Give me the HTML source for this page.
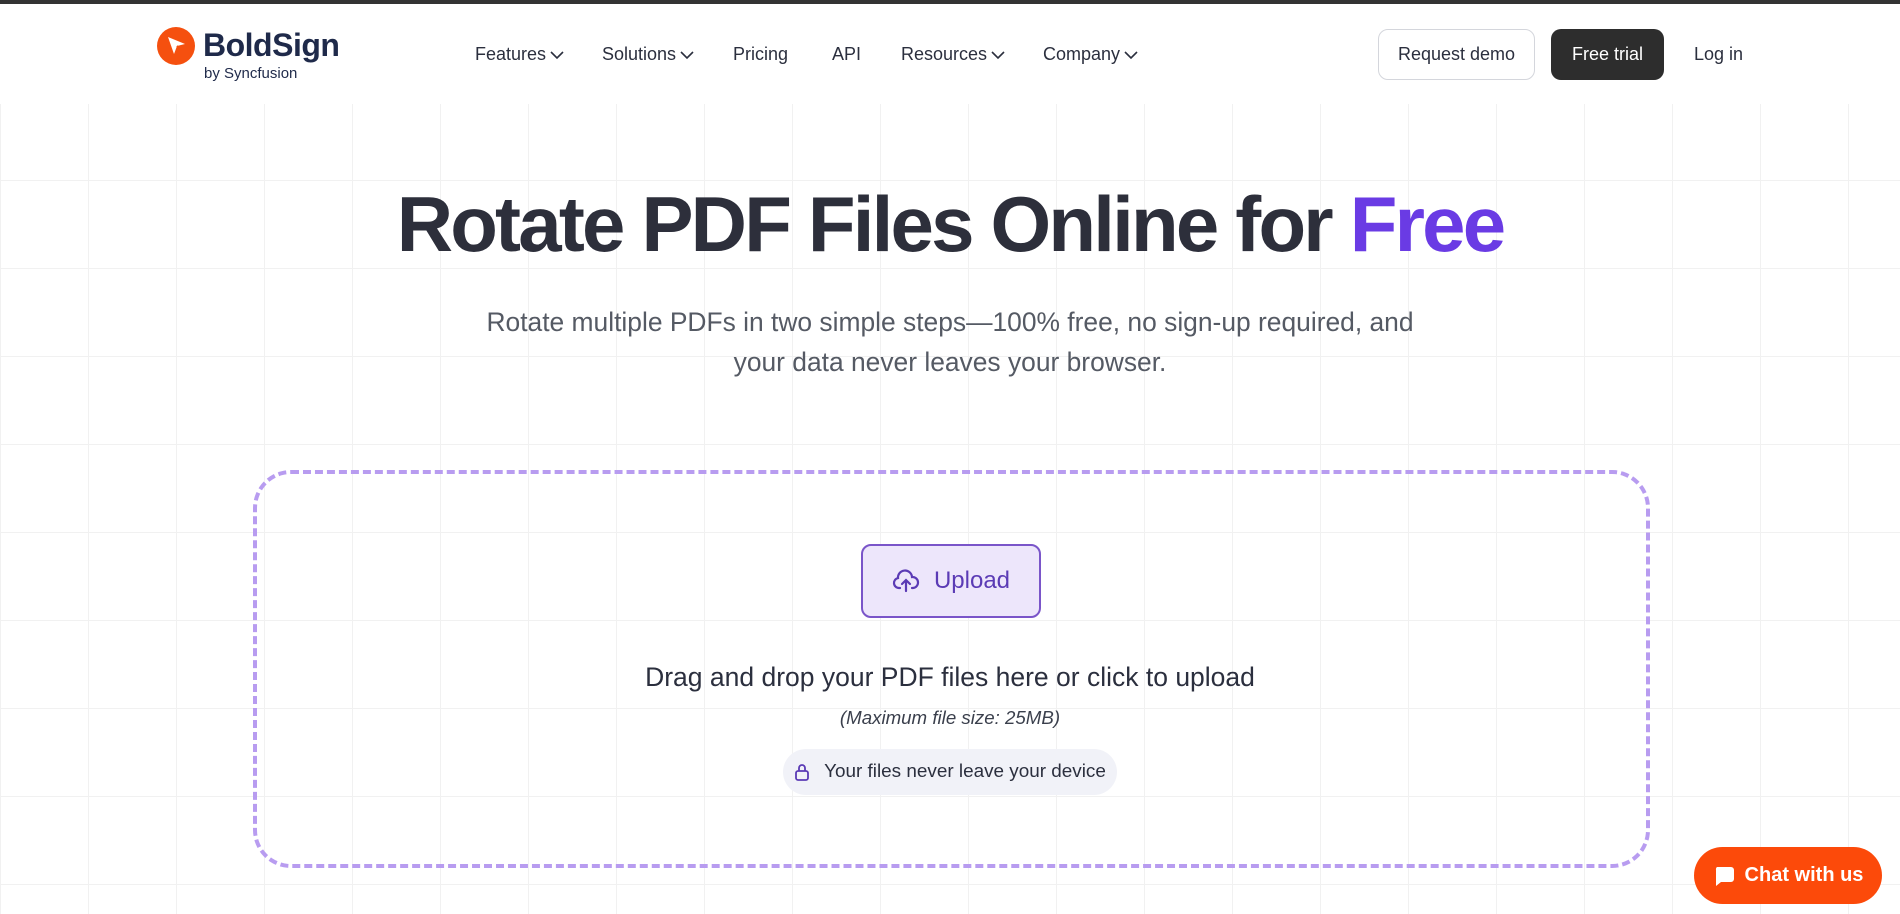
<!DOCTYPE html>
<html><head><meta charset="utf-8"><style>
*{box-sizing:border-box;margin:0;padding:0}
body{width:1900px;height:914px;overflow:hidden;background:#fff;font-family:"Liberation Sans",sans-serif;position:relative;color:#2b2f3e}
.top{position:absolute;top:0;left:0;width:1900px;height:4px;background:#333}
.grid{position:absolute;top:104px;left:0;width:1900px;height:810px;background-image:linear-gradient(#f1f1f1 1px,transparent 1px),linear-gradient(90deg,#f1f1f1 1px,transparent 1px);background-size:88px 88px;background-position:0 76px,0 0}
.logo{position:absolute;left:157px;top:27px}
.logo .ic{position:absolute;left:0;top:0;width:38px;height:38px;border-radius:50%;background:#f5500f}
.logo .t1{position:absolute;left:46px;top:0px;font-size:32px;font-weight:bold;color:#1f2a4a;letter-spacing:-0.5px}
.logo .t2{position:absolute;left:47px;top:38px;font-size:15px;color:#1f2a4a;white-space:nowrap}
.nav{position:absolute;top:44px;font-size:18px;color:#2b2f3e}
.nav svg{vertical-align:middle;margin-left:4px}
.btn{position:absolute;top:29px;height:51px;border-radius:10px;font-size:18px;display:flex;align-items:center;justify-content:center}
h1{position:absolute;top:185px;left:0;width:1900px;text-align:center;font-size:78px;line-height:78px;font-weight:bold;color:#2d2f3b;letter-spacing:-2.8px}
h1 span{color:#6a3be4}
.sub{position:absolute;top:302px;left:0;width:1900px;text-align:center;font-size:26.4px;line-height:40px;color:#555a64}
.drop{position:absolute;left:253px;top:470px;width:1397px;height:398px;border:4px dashed #b89cf0;border-radius:38px}
.up{position:absolute;left:861px;top:544px;width:180px;height:74px;border:2px solid #7a55c9;background:#ede6fb;border-radius:10px;display:flex;align-items:center;justify-content:center;font-size:24px;color:#5b3bb5}
.drag{position:absolute;top:662px;left:0;width:1900px;text-align:center;font-size:26.5px;color:#2b2f3e}
.max{position:absolute;top:707px;left:0;width:1900px;text-align:center;font-size:18.7px;font-style:italic;color:#3a3f4c}
.pill{position:absolute;left:783px;top:749px;width:334px;height:46px;border-radius:23px;background:#f1f2f8;display:flex;align-items:center;justify-content:center;font-size:18.9px;color:#2b2f3e}
.chat{position:absolute;left:1694px;top:847px;width:188px;height:57px;border-radius:29px;background:#fc4a0a;color:#fff;font-weight:bold;font-size:20px;display:flex;align-items:center;justify-content:center}
</style></head><body>
<div class="top"></div>
<div class="grid"></div>
<div class="logo"><div class="ic"><svg width="38" height="38" viewBox="0 0 38 38"><path d="M11 10 L28 17 L20 19 L17 27 Z" fill="#fff"/><path d="M20 19 L24 23" stroke="#f5500f" stroke-width="2"/></svg></div><div class="t1">BoldSign</div><div class="t2">by Syncfusion</div></div>
<div class="nav" style="left:475px">Features<svg width="14" height="10" viewBox="0 0 14 10"><path d="M1 2l6 6 6-6" stroke="#2b2f3e" stroke-width="1.6" fill="none"/></svg></div>
<div class="nav" style="left:602px">Solutions<svg width="14" height="10" viewBox="0 0 14 10"><path d="M1 2l6 6 6-6" stroke="#2b2f3e" stroke-width="1.6" fill="none"/></svg></div>
<div class="nav" style="left:733px">Pricing</div>
<div class="nav" style="left:832px">API</div>
<div class="nav" style="left:901px">Resources<svg width="14" height="10" viewBox="0 0 14 10"><path d="M1 2l6 6 6-6" stroke="#2b2f3e" stroke-width="1.6" fill="none"/></svg></div>
<div class="nav" style="left:1043px">Company<svg width="14" height="10" viewBox="0 0 14 10"><path d="M1 2l6 6 6-6" stroke="#2b2f3e" stroke-width="1.6" fill="none"/></svg></div>
<div class="btn" style="left:1378px;width:157px;border:1px solid #d4d6dc;color:#2b2f3e">Request demo</div>
<div class="btn" style="left:1551px;width:113px;background:#2d2d2d;color:#fff">Free trial</div>
<div class="nav" style="left:1694px">Log in</div>
<h1>Rotate PDF Files Online for <span>Free</span></h1>
<div class="sub">Rotate multiple PDFs in two simple steps—100% free, no sign-up required, and<br>your data never leaves your browser.</div>
<div class="drop"></div>
<div class="up"><svg width="28" height="24" viewBox="0 0 28 24" style="margin-right:14px"><path d="M8 19H7a5 5 0 0 1-1-9.9A7 7 0 0 1 20 8a5 5 0 0 1 1 11h-1" stroke="#5b3bb5" stroke-width="2.2" fill="none" stroke-linecap="round"/><path d="M14 22V12M10 15l4-4 4 4" stroke="#5b3bb5" stroke-width="2.2" fill="none" stroke-linecap="round"/></svg>Upload</div>
<div class="drag">Drag and drop your PDF files here or click to upload</div>
<div class="max">(Maximum file size: 25MB)</div>
<div class="pill"><svg width="16" height="18" viewBox="0 0 16 18" style="margin-right:14px"><rect x="2" y="8" width="12" height="9" rx="2" stroke="#5b3bb5" stroke-width="1.8" fill="none"/><path d="M5 8V5a3 3 0 0 1 6 0v3" stroke="#5b3bb5" stroke-width="1.8" fill="none"/></svg>Your files never leave your device</div>
<div class="chat"><svg width="22" height="22" viewBox="0 0 22 22" style="margin-right:10px"><path d="M4 2h14a3 3 0 0 1 3 3v9a3 3 0 0 1-3 3H8l-5 4V5a3 3 0 0 1 1-3z" fill="#fff"/></svg>Chat with us</div>
</body></html>
